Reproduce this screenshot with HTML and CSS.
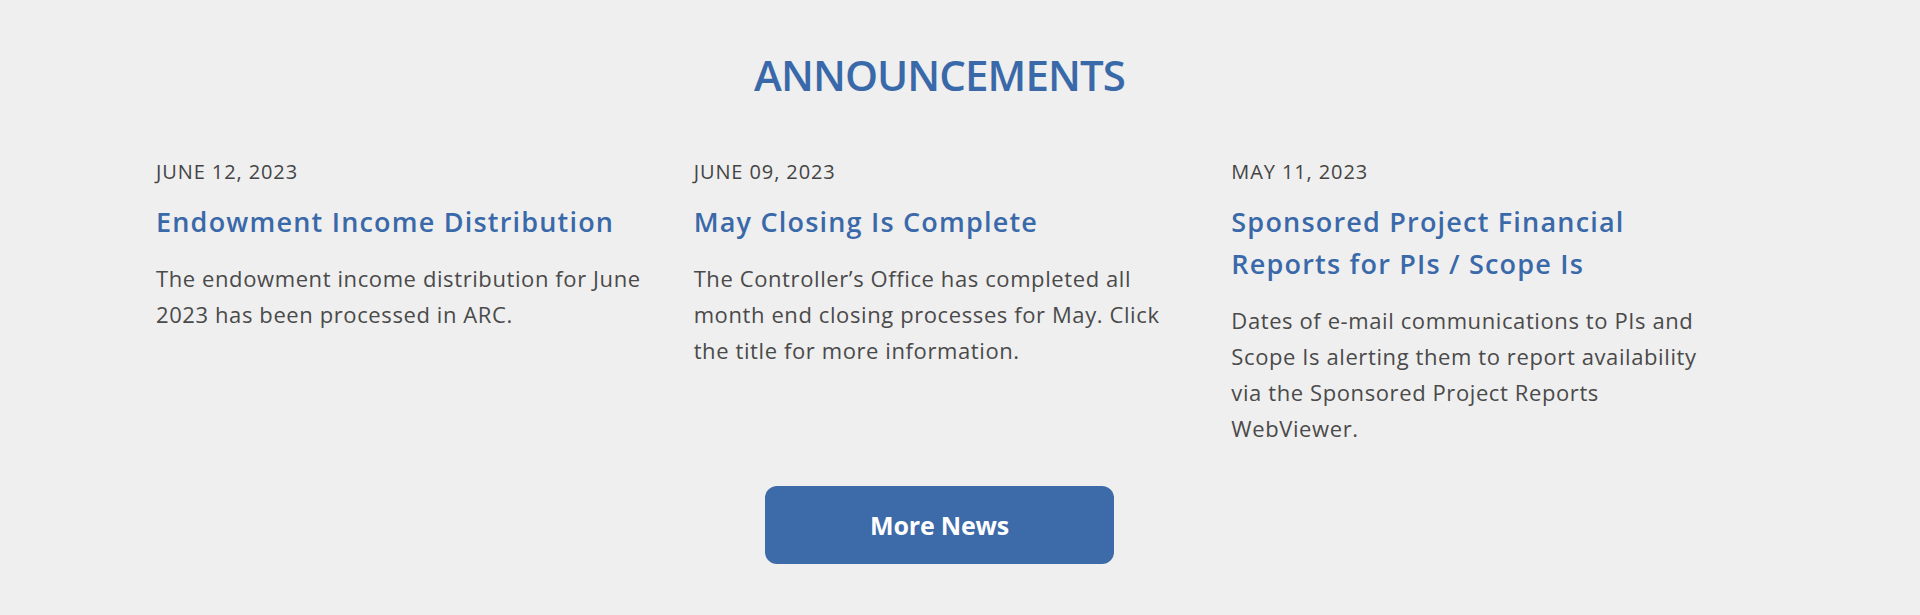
FILE: index.html
```html
<!DOCTYPE html>
<html lang="en">
<head>
  <meta charset="UTF-8" />
  <meta name="viewport" content="width=device-width, initial-scale=1" />
  <title>Announcements</title>
  <link rel="stylesheet" href="styles.css">
</head>
<body>
<section class="announcements">
  <h2 class="section-title">ANNOUNCEMENTS</h2>

  <div class="news-grid">
    <article class="news-item">
      <div class="news-date">JUNE 12, 2023</div>
      <h3 class="news-title"><a href="#">Endowment Income Distribution</a></h3>
      <p class="news-text">The endowment income distribution for June 2023 has been processed in ARC.</p>
    </article>

    <article class="news-item">
      <div class="news-date">JUNE 09, 2023</div>
      <h3 class="news-title"><a href="#">May Closing Is Complete</a></h3>
      <p class="news-text">The Controller’s Office has completed all month end closing processes for May. Click the title for more information.</p>
    </article>

    <article class="news-item">
      <div class="news-date">MAY 11, 2023</div>
      <h3 class="news-title"><a href="#">Sponsored Project Financial Reports for PIs / Scope Is</a></h3>
      <p class="news-text">Dates of e-mail communications to PIs and Scope Is alerting them to report availability via the Sponsored Project Reports WebViewer.</p>
    </article>
  </div>

  <div class="more-wrap">
    <a class="more-btn" href="#">More News</a>
  </div>
</section>
</body>
</html>
```

FILE: styles.css
```css
body {
  margin: 0;
  background: #efefef;
  font-family: 'Open Sans', sans-serif;
  color: #4a4a4a;
}

.announcements {
  width: 1567px;
  margin-left: 156px;
  padding-top: 50px;
  padding-bottom: 52px;
}

.section-title {
  margin: 0;
  text-align: center;
  font-size: 42px;
  line-height: 50px;
  font-weight: 600;
  letter-spacing: -0.9px;
  color: #3a69a9;
}

.news-grid {
  display: grid;
  grid-template-columns: repeat(3, 1fr);
  gap: 46px;
  margin-top: 60px;
}

.news-date {
  font-size: 20px;
  line-height: 24px;
  letter-spacing: 0.9px;
  color: #444;
}

.news-title {
  margin: 17px 0 0 0;
  font-size: 27px;
  line-height: 42px;
  font-weight: 600;
  letter-spacing: 1.2px;
}

.news-title a {
  color: #3a69a9;
  text-decoration: none;
}

.news-text {
  margin: 17px 0 0 0;
  font-size: 22px;
  line-height: 36px;
  letter-spacing: 0.6px;
  color: #4a4a4a;
}

.more-wrap {
  display: flex;
  justify-content: center;
  margin-top: 40px;
}

.more-btn {
  display: flex;
  align-items: center;
  justify-content: center;
  width: 349px;
  height: 78px;
  background-color: #3d6aa8;
  border-radius: 12px;
  color: white;
  font-size: 25px;
  font-weight: 700;
  letter-spacing: -0.2px;
  text-decoration: none;
}
```
